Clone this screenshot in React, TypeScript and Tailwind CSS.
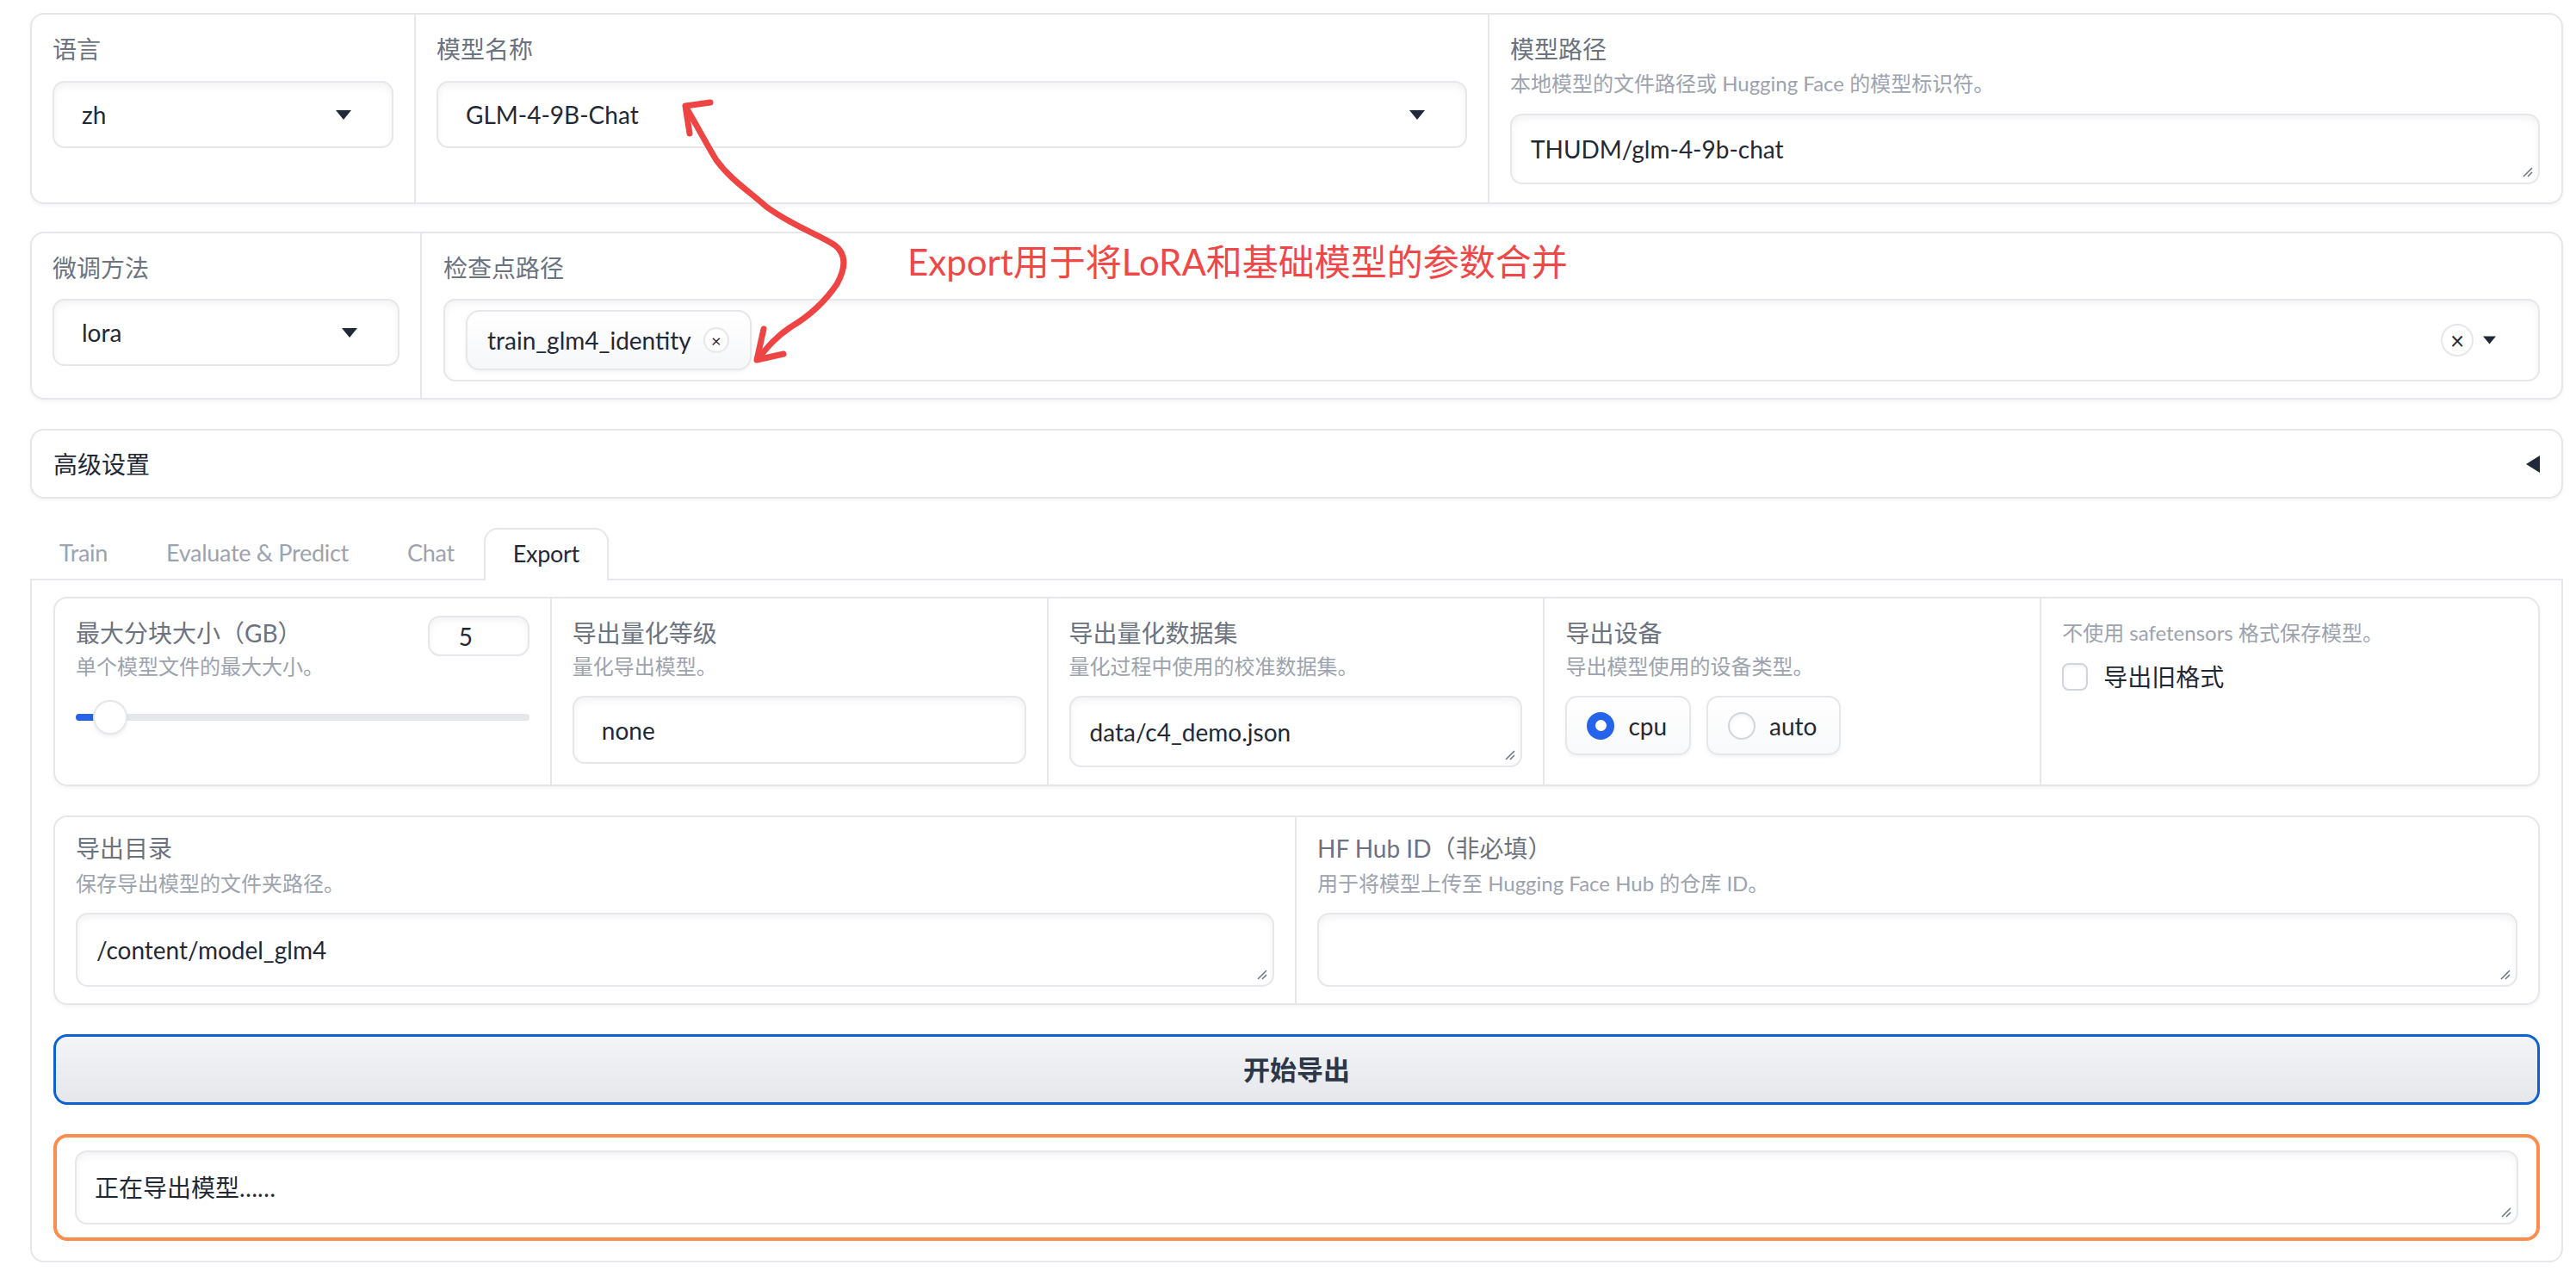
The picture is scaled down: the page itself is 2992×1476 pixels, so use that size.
const card = "rounded-[16px] border-2 border-[#e5e7eb] bg-white shadow-[0_2px_4px_rgba(0,0,0,0.05)]";
const field = "rounded-[14px] border-2 border-[#e5e7eb] bg-white shadow-[inset_0_4px_8px_rgba(0,0,0,0.05)]";

function Label({ children }: { children: React.ReactNode }) {
  return <div className="text-[28px] leading-[40px] text-[#6b7280]">{children}</div>;
}

function Info({ children, className = "" }: { children: React.ReactNode; className?: string }) {
  return <div className={`text-[24px] leading-[32px] text-[#9ca3af] ${className}`}>{children}</div>;
}

function Caret({ w = 18, h = 11 }: { w?: number; h?: number }) {
  return (
    <svg width={w} height={h} viewBox="0 0 18 11" className="shrink-0">
      <path d="M0 0h18L9 11z" fill="#1f2937" />
    </svg>
  );
}

function Grip() {
  return (
    <svg width="14" height="14" viewBox="0 0 14 14" className="absolute bottom-[6px] right-[6px]">
      <path d="M13 3L3 13M13 8L8 13" stroke="#6b7280" strokeWidth="1.5" />
    </svg>
  );
}

function Dropdown({ value, className = "" }: { value: string; className?: string }) {
  return (
    <div className={`${field} flex h-[78px] items-center justify-between pl-[32px] pr-[47px] ${className}`}>
      <span className="text-[28px] text-[#1f2937]">{value}</span>
      <Caret />
    </div>
  );
}

function TextArea({ value, h, className = "" }: { value?: string; h: string; className?: string }) {
  return (
    <div className={`${field} relative flex items-center pl-[22px] ${h} ${className}`}>
      <span className="text-[28px] text-[#1f2937]">{value}</span>
      <Grip />
    </div>
  );
}

function Arrow() {
  return (
    <svg width="2992" height="1476" className="pointer-events-none absolute left-0 top-0" fill="none">
      <path
        d="M797 125 C812 150 822 170 832 186 C848 208 870 222 890 240 C920 262 950 272 970 285 C984 296 982 312 972 330 C955 355 935 370 918 380 C900 392 890 405 880 417"
        stroke="#ef4444"
        strokeWidth="7"
        strokeLinecap="round"
        strokeLinejoin="round"
      />
      <path d="M801 155 L796 123 L825 119" stroke="#ef4444" strokeWidth="7" strokeLinecap="round" strokeLinejoin="round" />
      <path d="M887 382 L879 418 L910 411" stroke="#ef4444" strokeWidth="7" strokeLinecap="round" strokeLinejoin="round" />
    </svg>
  );
}

function Radio({ label, checked }: { label: string; checked?: boolean }) {
  return (
    <div className="flex h-[69px] items-center gap-[16px] rounded-[14px] border-2 border-[#e5e7eb] bg-linear-to-b from-white to-[#f8f9fa] pl-[23px] pr-[26px] shadow-[0_2px_4px_rgba(0,0,0,0.05)]">
      {checked ? (
        <span className="flex h-[32px] w-[32px] items-center justify-center rounded-full bg-[#2563eb]">
          <span className="h-[13px] w-[13px] rounded-full bg-white" />
        </span>
      ) : (
        <span className="h-[32px] w-[32px] rounded-full border-2 border-[#d1d5db] bg-white shadow-[inset_0_2px_4px_rgba(0,0,0,0.06)]" />
      )}
      <span className="text-[28px] text-[#1f2937]">{label}</span>
    </div>
  );
}

export default function App() {
  return (
    <div className="relative min-h-[1476px] w-[2992px] bg-white pl-[35px] pr-[15px] pt-[15px] font-['Lato','Noto_Sans_CJK_SC',sans-serif]">
      {/* Model row */}
      <div className={`${card} flex divide-x-2 divide-[#e5e7eb]`}>
        <div className="w-[446px] shrink-0 px-[24px] pb-[21px] pt-[20px]">
          <Label>语言</Label>
          <Dropdown value="zh" className="mt-[17px]" />
        </div>
        <div className="w-[1247px] shrink-0 px-[24px] pb-[21px] pt-[20px]">
          <Label>模型名称</Label>
          <Dropdown value="GLM-4-9B-Chat" className="mt-[17px]" />
        </div>
        <div className="flex-1 pb-[21px] pl-[24px] pr-[25px] pt-[20px]">
          <Label>模型路径</Label>
          <Info className="mt-[4px]">本地模型的文件路径或 Hugging Face 的模型标识符。</Info>
          <TextArea value="THUDM/glm-4-9b-chat" h="h-[82px]" className="mt-[19px]" />
        </div>
      </div>

      {/* Finetuning row */}
      <div className={`${card} mt-[32px] flex divide-x-2 divide-[#e5e7eb]`}>
        <div className="w-[453px] shrink-0 px-[24px] pb-[19px] pt-[20px]">
          <Label>微调方法</Label>
          <Dropdown value="lora" className="mt-[16px]" />
        </div>
        <div className="flex-1 pb-[19px] pl-[25px] pr-[25px] pt-[20px]">
          <Label>检查点路径</Label>
          <div className={`${field} mt-[16px] flex h-[96px] items-center justify-between pl-[24px] pr-[49px]`}>
            <div className="flex h-[70px] items-center gap-[14px] rounded-[16px] border-2 border-[#e5e7eb] bg-linear-to-b from-white to-[#f6f7f9] pl-[23px] pr-[24px] shadow-[0_2px_4px_rgba(0,0,0,0.05)]">
              <span className="text-[28px] text-[#1f2937]">train_glm4_identity</span>
              <span className="flex h-[30px] w-[30px] items-center justify-center rounded-full border-2 border-[#e5e7eb] bg-white text-[20px] leading-none text-[#1f2937]">
                ×
              </span>
            </div>
            <div className="flex items-center gap-[11px]">
              <span className="flex h-[38px] w-[38px] items-center justify-center rounded-full border-2 border-[#e5e7eb] text-[28px] leading-none text-[#1f2937]">
                ×
              </span>
              <Caret w={15} h={10} />
            </div>
          </div>
        </div>
      </div>

      {/* Annotation */}
      <div className="absolute left-[1054px] top-[281px] text-[42px] leading-[46px] text-[#f04848]">
        Export用于将LoRA和基础模型的参数合并
      </div>
      <Arrow />

      {/* Advanced settings */}
      <div className={`${card} mt-[34px] flex h-[81px] items-center justify-between pl-[25px] pr-[25px]`}>
        <span className="text-[28px] text-[#1f2937]">高级设置</span>
        <svg width="16" height="20" viewBox="0 0 16 20">
          <path d="M16 0v20L0 10z" fill="#1f2937" />
        </svg>
      </div>

      {/* Tabs */}
      <div className="mt-[34px] flex h-[59px] items-end">
        {["Train", "Evaluate & Predict", "Chat"].map((t) => (
          <div key={t} className="flex h-[59px] items-center border-2 border-transparent px-[32px] text-[27px] tracking-[-0.3px] text-[#9ca3af]">
            {t}
          </div>
        ))}
        <div className="relative z-10 -mb-[2px] flex h-[61px] items-center rounded-t-[16px] border-2 border-b-0 border-[#e5e7eb] bg-white px-[32px] pb-[2px] text-[27px] tracking-[-0.3px] text-[#1f2937]">
          Export
        </div>
      </div>

      <div className="flex flex-col rounded-b-[16px] border-2 border-[#e5e7eb] px-[25px] pb-[23px] pt-[19px]">
        {/* Export options */}
        <div className={`${card} grid grid-cols-5 divide-x-2 divide-[#e5e7eb]`}>
          <div className="px-[24px] pb-[20px] pt-[20px]">
            <div className="flex h-[40px] items-start justify-between">
              <Label>最大分块大小（GB）</Label>
              <div className={`${field} flex h-[47px] w-[118px] shrink-0 items-center pl-[34px] text-[28px] text-[#1f2937]`}>5</div>
            </div>
            <Info className="mt-[3px]">单个模型文件的最大大小。</Info>
            <div className="relative mt-[23px] h-[40px]">
              <div className="absolute left-0 right-0 top-[16px] h-[8px] rounded-full bg-[#e5e7eb]" />
              <div className="absolute left-0 top-[16px] h-[8px] w-[34px] rounded-l-full bg-[#2563eb]" />
              <div className="absolute left-[20px] top-0 h-[40px] w-[40px] rounded-full border-2 border-[#e5e7eb] bg-white shadow-[0_2px_4px_rgba(0,0,0,0.08)]" />
            </div>
          </div>
          <div className="px-[24px] pb-[20px] pt-[20px]">
            <Label>导出量化等级</Label>
            <Info className="mt-[3px]">量化导出模型。</Info>
            <div className={`${field} mt-[18px] flex h-[79px] items-center pl-[32px] text-[28px] text-[#1f2937]`}>none</div>
          </div>
          <div className="px-[24px] pb-[20px] pt-[20px]">
            <Label>导出量化数据集</Label>
            <Info className="mt-[3px]">量化过程中使用的校准数据集。</Info>
            <TextArea value="data/c4_demo.json" h="h-[83px]" className="mt-[18px]" />
          </div>
          <div className="px-[24px] pb-[20px] pt-[20px]">
            <Label>导出设备</Label>
            <Info className="mt-[3px]">导出模型使用的设备类型。</Info>
            <div className="mt-[18px] flex gap-[18px]">
              <Radio label="cpu" checked />
              <Radio label="auto" />
            </div>
          </div>
          <div className="px-[24px] pb-[20px] pt-[20px]">
            <Info className="leading-[40px]">不使用 safetensors 格式保存模型。</Info>
            <div className="mt-[15px] flex items-center gap-[18px]">
              <span className="h-[32px] w-[30px] rounded-[8px] border-2 border-[#d1d5db] bg-white shadow-[inset_0_2px_4px_rgba(0,0,0,0.05)]" />
              <span className="text-[28px] leading-[32px] text-[#1f2937]">导出旧格式</span>
            </div>
          </div>
        </div>

        {/* Output dir */}
        <div className={`${card} mt-[34px] grid grid-cols-2 divide-x-2 divide-[#e5e7eb]`}>
          <div className="px-[24px] pb-[19px] pt-[16px]">
            <Label>导出目录</Label>
            <Info className="mt-[5px]">保存导出模型的文件夹路径。</Info>
            <TextArea value="/content/model_glm4" h="h-[86px]" className="mt-[18px]" />
          </div>
          <div className="px-[24px] pb-[19px] pt-[16px]">
            <Label>HF Hub ID（非必填）</Label>
            <Info className="mt-[5px]">用于将模型上传至 Hugging Face Hub 的仓库 ID。</Info>
            <TextArea h="h-[86px]" className="mt-[18px]" />
          </div>
        </div>

        <button className="mt-[34px] flex h-[82px] items-center justify-center rounded-[16px] border-[3px] border-[#0a62d3] bg-linear-to-b from-[#f3f4f6] to-[#e6e7eb] text-[31px] font-semibold text-[#2d3748]">
          开始导出
        </button>

        <div className="mt-[34px] rounded-[16px] border-[4px] border-[#fd8d4d] bg-white px-[21px] py-[15px]">
          <div className={`${field} relative flex h-[86px] items-center pl-[21px]`}>
            <span className="text-[28px] text-[#1f2937]">正在导出模型……</span>
            <Grip />
          </div>
        </div>
      </div>
    </div>
  );
}
